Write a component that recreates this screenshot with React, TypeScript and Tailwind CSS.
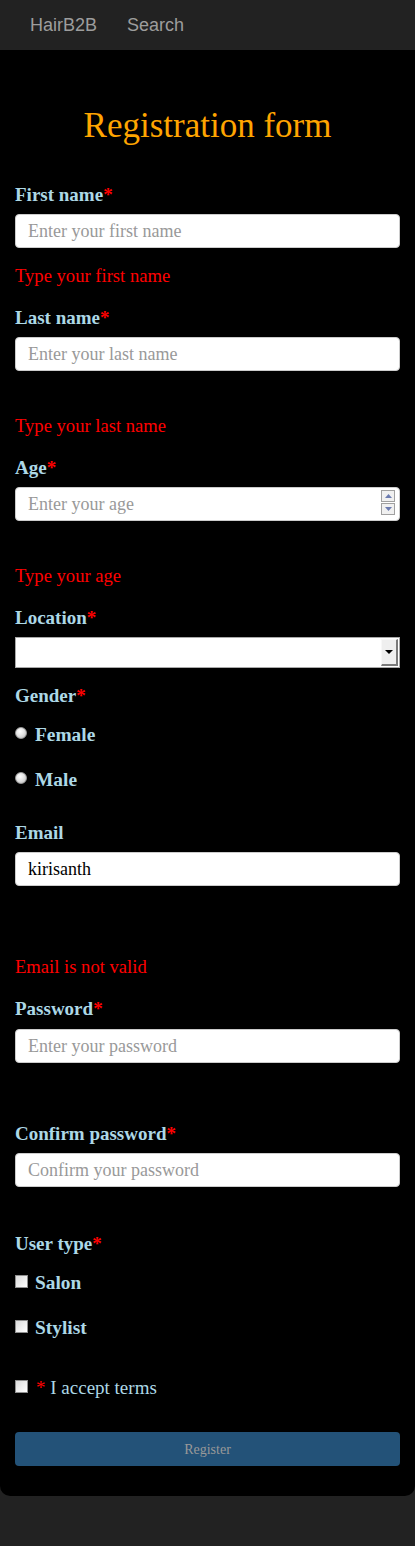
const serif = "font-['Liberation_Serif','Times_New_Roman',serif]"

function Label({ text, required = true, className = '' }: { text: string; required?: boolean; className?: string }) {
    return (
        <div className={`text-[19px] leading-[20px] font-bold text-[#add8e6] ${className}`}>
            {text}
            {required && <span className="text-[#ff0000]">*</span>}
        </div>
    )
}

function ErrorText({ text, className = '' }: { text: string; className?: string }) {
    return <div className={`text-[18.6px] leading-[20px] text-[#ff0000] ${className}`}>{text}</div>
}

function TextInput({ placeholder, value, className = '' }: { placeholder: string; value?: string; className?: string }) {
    return (
        <input
            type="text"
            placeholder={placeholder}
            defaultValue={value}
            className={`block w-full h-[34px] rounded-[4px] border border-[#cccccc] bg-white px-[12px] text-[18px] text-black placeholder:text-[#999999] outline-none ${serif} ${className}`}
        />
    )
}

function Radio({ label, className = '' }: { label: string; className?: string }) {
    return (
        <div className={`flex items-start h-[20px] ${className}`}>
            <span className="mt-[2px] w-[12px] h-[12px] rounded-full border border-[#9a9a9a] bg-[radial-gradient(circle_at_40%_35%,#ffffff_0%,#e4e4e4_45%,#b8b8b8_100%)]" />
            <span className="ml-[8px] text-[19.4px] leading-[20px] font-bold text-[#add8e6]">{label}</span>
        </div>
    )
}

function Checkbox() {
    return (
        <span className="mt-[2px] w-[13px] h-[13px] border border-[#8f8f8f] bg-[linear-gradient(135deg,#dcdcdc_0%,#ffffff_100%)] shrink-0" />
    )
}

export default function App() {
    return (
        <div className={`min-h-[1546px] bg-[#222222] ${serif}`}>
            <nav className="h-[50px] bg-[#222222] flex items-center font-['Liberation_Sans',Arial,sans-serif] text-[18px] text-[#9d9d9d]">
                <span className="ml-[30px]">HairB2B</span>
                <span className="ml-[30px]">Search</span>
            </nav>

            <div className="bg-black rounded-b-[10px] px-[15px] pt-[56px] pb-[30px]">
                <h1 className="text-center text-[35px] leading-[40px] text-[#ffa500]">Registration form</h1>

                <Label text="First name" className="mt-[39px]" />
                <TextInput placeholder="Enter your first name" className="mt-[9px]" />
                <ErrorText text="Type your first name" className="mt-[18px]" />

                <Label text="Last name" className="mt-[22px]" />
                <TextInput placeholder="Enter your last name" className="mt-[9px]" />
                <ErrorText text="Type your last name" className="mt-[45px]" />

                <Label text="Age" className="mt-[22px]" />
                <div className="relative mt-[9px]">
                    <TextInput placeholder="Enter your age" />
                    <div className="absolute right-[5px] top-[3px] flex flex-col gap-[1px]">
                        <div className="w-[14px] h-[12px] border border-[#a0a0a0] bg-[#f0f0f0] flex items-center justify-center">
                            <svg width="7" height="4" viewBox="0 0 7 4"><path d="M0 4 L3.5 0 L7 4 Z" fill="#6b7bb0" /></svg>
                        </div>
                        <div className="w-[14px] h-[12px] border border-[#a0a0a0] bg-[#f0f0f0] flex items-center justify-center">
                            <svg width="7" height="4" viewBox="0 0 7 4"><path d="M0 0 L3.5 4 L7 0 Z" fill="#6b7bb0" /></svg>
                        </div>
                    </div>
                </div>
                <ErrorText text="Type your age" className="mt-[45px]" />

                <Label text="Location" className="mt-[22px]" />
                <div className="relative mt-[9px] h-[31px] bg-white border border-[#a9a9a9]">
                    <div className="absolute right-[1px] top-[1px] w-[17px] h-[27px] bg-[#efefef] border-r-[2px] border-b-[2px] border-[#7a7a7a] border-l border-t border-l-[#f8f8f8] border-t-[#f8f8f8] flex items-center justify-center">
                        <svg width="8" height="4" viewBox="0 0 8 4"><path d="M0 0 L4 4 L8 0 Z" fill="#000" /></svg>
                    </div>
                </div>

                <Label text="Gender" className="mt-[18px]" />
                <Radio label="Female" className="mt-[19px]" />
                <Radio label="Male" className="mt-[25px]" />

                <Label text="Email" required={false} className="mt-[33px]" />
                <TextInput placeholder="" value="kirisanth" className="mt-[9px]" />
                <ErrorText text="Email is not valid" className="mt-[71px]" />

                <Label text="Password" className="mt-[22px]" />
                <TextInput placeholder="Enter your password" className="mt-[10px]" />

                <Label text="Confirm password" className="mt-[61px]" />
                <TextInput placeholder="Confirm your password" className="mt-[9px]" />

                <Label text="User type" className="mt-[47px]" />
                <div className="flex items-start h-[20px] mt-[19px]">
                    <Checkbox />
                    <span className="ml-[7px] text-[19.4px] leading-[20px] font-bold text-[#add8e6]">Salon</span>
                </div>
                <div className="flex items-start h-[20px] mt-[25px]">
                    <Checkbox />
                    <span className="ml-[7px] text-[19.4px] leading-[20px] font-bold text-[#add8e6]">Stylist</span>
                </div>

                <div className="flex items-start h-[20px] mt-[40px]">
                    <Checkbox />
                    <span className="ml-[8px] text-[19px] leading-[20px] text-[#add8e6]">
                        <span className="text-[#ff0000]">*</span> I accept terms
                    </span>
                </div>

                <button className="mt-[34px] w-full h-[34px] rounded-[4px] bg-[#235278] text-[14px] text-[#999999]">
                    Register
                </button>
            </div>
        </div>
    )
}
